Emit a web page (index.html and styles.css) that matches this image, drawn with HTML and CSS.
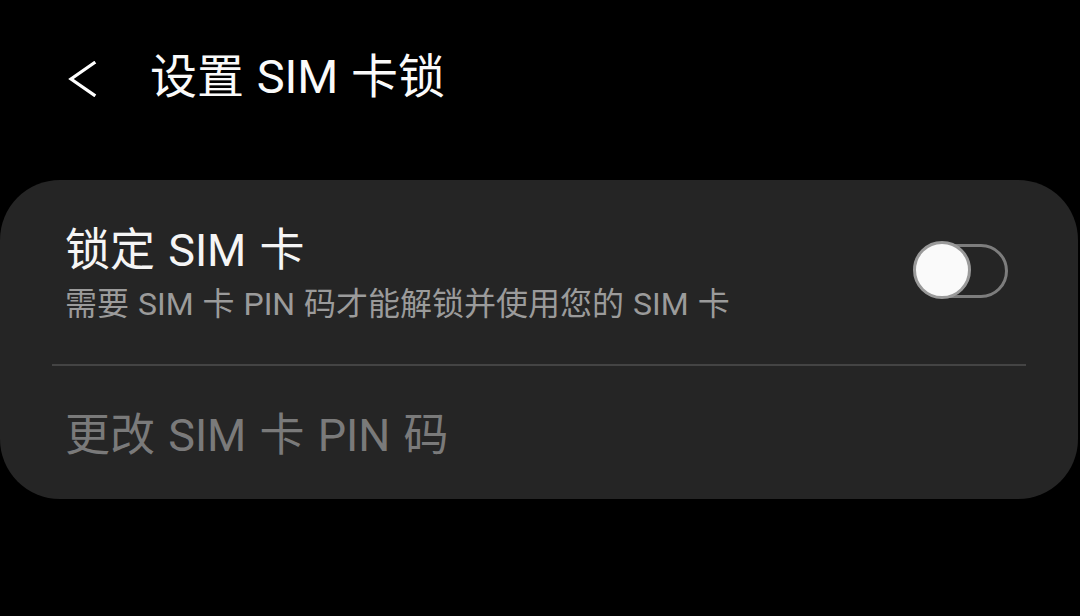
FILE: index.html
```html
<!DOCTYPE html>
<html lang="zh-CN">
<head>
<meta charset="utf-8">
<link rel="stylesheet" href="styles.css">
</head>
<body>
<div class="screen">
  <header class="appbar">
    <span class="back">
      <svg width="30" height="36" viewBox="0 0 30 36"><path d="M26 2 L3 18 L26 34" fill="none" stroke="#fff" stroke-width="3.2" stroke-linecap="square" stroke-linejoin="miter"/></svg>
    </span>
    <h1 class="title">设置 SIM 卡锁</h1>
  </header>
  <section class="card">
    <div class="row row-toggle">
      <div class="row-text">
        <div class="row-title">锁定 SIM 卡</div>
        <div class="row-sub">需要 SIM 卡 PIN 码才能解锁并使用您的 SIM 卡</div>
      </div>
      <div class="switch"><span class="thumb"></span></div>
    </div>
    <div class="divider"></div>
    <div class="row row-disabled">
      <div class="row-title dim">更改 SIM 卡 PIN 码</div>
    </div>
  </section>
</div>
</body>
</html>
```

FILE: styles.css
```css
html, body {
  margin: 0;
  padding: 0;
  background: #000;
}
body {
  font-family: "Roboto", "Noto Sans CJK SC", sans-serif;
  color: #fff;
}
.screen {
  width: 1080px;
  height: 616px;
  display: flex;
  flex-direction: column;
}
.appbar {
  height: 180px;
  display: flex;
  align-items: flex-start;
  box-sizing: border-box;
  padding-top: 49px;
}
.back {
  width: 150px;
  display: flex;
  padding-left: 68px;
  box-sizing: border-box;
  padding-top: 12px;
}
.title {
  margin: 0;
  font-weight: 400;
  font-size: 47px;
  line-height: 56px;
  color: #fafafa;
  word-spacing: 1px;
}
.card {
  width: 1078px;
  background: #252525;
  border-radius: 60px;
  height: 319px;
  box-sizing: border-box;
  display: flex;
  flex-direction: column;
}
.row-toggle {
  display: flex;
  justify-content: space-between;
  padding: 45px 70px 0 65px;
  height: 184px;
  box-sizing: border-box;
  align-items: flex-start;
}
.row-title {
  font-size: 45px;
  line-height: 52px;
  color: #f5f5f5;
  word-spacing: 2px;
}
.row-sub {
  font-size: 32px;
  line-height: 40px;
  color: #9b9b9b;
  margin-top: 7px;
  word-spacing: 1px;
}
.switch {
  position: relative;
  width: 92px;
  height: 54px;
  margin-top: 19px;
  border: 3px solid #7d7d7d;
  border-radius: 30px;
  box-sizing: border-box;
}
.thumb {
  position: absolute;
  left: -6px;
  top: -6px;
  width: 58px;
  height: 58px;
  box-sizing: border-box;
  border-radius: 50%;
  background: #fafafa;
  border: 3px solid #9a9a9a;
}
.divider {
  height: 2px;
  background: #444;
  margin: 0 52px 0 52px;
}
.row-disabled {
  padding: 44px 65px 0 65px;
}
.dim {
  color: #7a7a7a;
}
```
